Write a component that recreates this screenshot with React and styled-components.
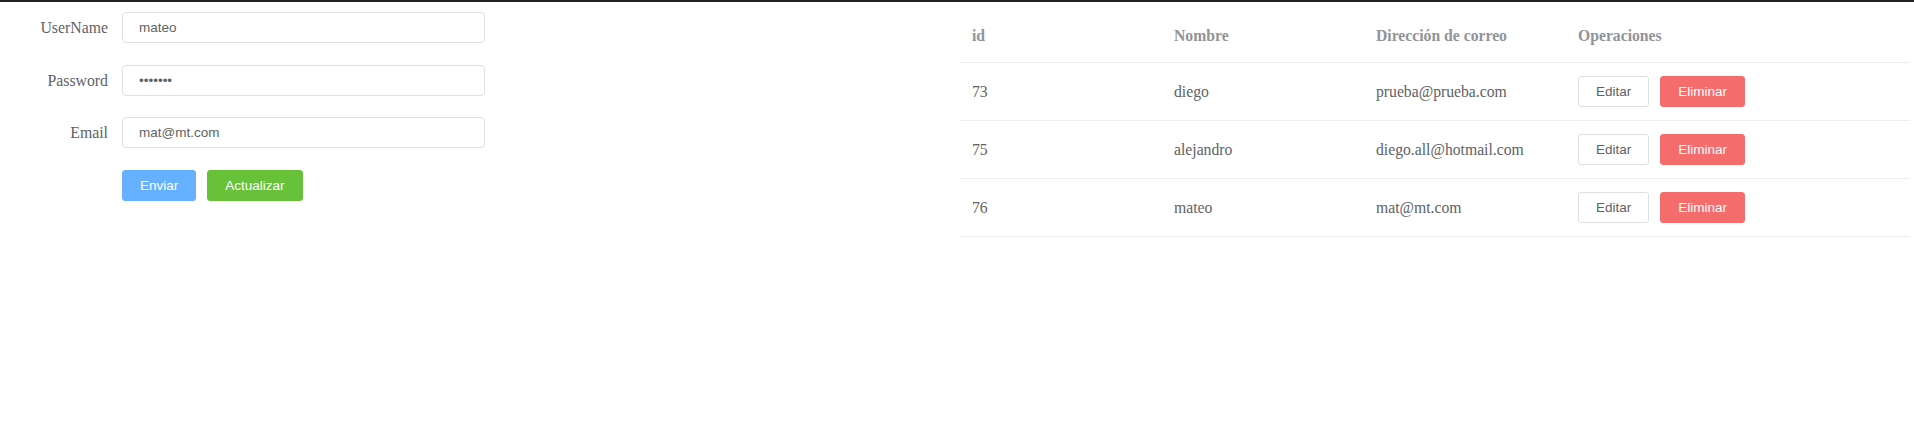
import React from "react";
import styled, { createGlobalStyle } from "styled-components";

const GlobalStyle = createGlobalStyle`
  html, body { margin: 0; padding: 0; background: #ffffff; }
  body { font-family: "Liberation Serif", "Times New Roman", serif; font-size: 16px; color: #606266; }
  * { box-sizing: border-box; }
`;

const TopBar = styled.div`
  height: 2px;
  background: #232323;
`;

const Layout = styled.div`
  display: grid;
  grid-template-columns: 960px 1fr;
`;

const FormPanel = styled.form`
  display: flex;
  flex-direction: column;
  gap: 21.7px;
  padding-top: 10px;
  width: 485px;
`;

const FormRow = styled.div`
  display: grid;
  grid-template-columns: 108px 363px;
  column-gap: 14px;
  align-items: center;
`;

const Label = styled.label`
  text-align: right;
  font-family: "Liberation Serif", "Times New Roman", serif;
  font-size: 15.8px;
  color: #606266;
  line-height: 31px;
`;

const Input = styled.input`
  height: 31px;
  width: 100%;
  border: 1px solid #dcdfe6;
  border-radius: 4px;
  padding: 0 16px;
  font-family: "Liberation Sans", Arial, sans-serif;
  font-size: 13.5px;
  color: #606266;
  background: #fff;
  outline: none;
`;

const ButtonGroup = styled.div`
  display: flex;
  gap: 11px;
`;

const variants = {
  primary: { bg: "#66b1ff", border: "#66b1ff", color: "#ffffff" },
  success: { bg: "#67c23a", border: "#67c23a", color: "#ffffff" },
  danger: { bg: "#f56c6c", border: "#f56c6c", color: "#ffffff" },
  plain: { bg: "#ffffff", border: "#dcdfe6", color: "#606266" },
};

const Button = styled.button`
  height: 31px;
  padding: 0 17px;
  border-radius: 3px;
  border: 1px solid ${(p) => variants[p.$variant].border};
  background: ${(p) => variants[p.$variant].bg};
  color: ${(p) => variants[p.$variant].color};
  font-family: "Liberation Sans", Arial, sans-serif;
  font-size: 13.5px;
  line-height: 1;
  cursor: pointer;
`;

const TablePanel = styled.div`
  padding-top: 8px;
  padding-right: 4px;
`;

const Table = styled.table`
  width: 100%;
  border-collapse: collapse;
  table-layout: fixed;
  font-family: "Liberation Serif", "Times New Roman", serif;
  font-size: 15.7px;
`;

const HeadCell = styled.th`
  width: ${(p) => p.$width || "auto"};
  height: 52px;
  padding: 0 0 0 12px;
  text-align: left;
  font-weight: bold;
  color: #909399;
  border-bottom: 1px solid #ebeef5;
`;

const Cell = styled.td`
  height: 58px;
  padding: 1px 0 0 12px;
  color: #606266;
  border-bottom: 1px solid #ebeef5;
`;

const Actions = styled.div`
  display: flex;
  gap: 11px;
`;

const rows = [
  { id: 73, name: "diego", email: "prueba@prueba.com" },
  { id: 75, name: "alejandro", email: "diego.all@hotmail.com" },
  { id: 76, name: "mateo", email: "mat@mt.com" },
];

export default function App() {
  return (
    <>
      <GlobalStyle />
      <TopBar />
      <Layout>
        <FormPanel onSubmit={(e) => e.preventDefault()}>
          <FormRow>
            <Label>UserName</Label>
            <Input type="text" defaultValue="mateo" />
          </FormRow>
          <FormRow>
            <Label>Password</Label>
            <Input type="password" defaultValue="1234567" />
          </FormRow>
          <FormRow>
            <Label>Email</Label>
            <Input type="text" defaultValue="mat@mt.com" />
          </FormRow>
          <FormRow>
            <span />
            <ButtonGroup>
              <Button type="button" $variant="primary">Enviar</Button>
              <Button type="button" $variant="success">Actualizar</Button>
            </ButtonGroup>
          </FormRow>
        </FormPanel>
        <TablePanel>
          <Table>
            <thead>
              <tr>
                <HeadCell $width="202px">id</HeadCell>
                <HeadCell $width="202px">Nombre</HeadCell>
                <HeadCell $width="202px">Dirección de correo</HeadCell>
                <HeadCell>Operaciones</HeadCell>
              </tr>
            </thead>
            <tbody>
              {rows.map((r) => (
                <tr key={r.id}>
                  <Cell>{r.id}</Cell>
                  <Cell>{r.name}</Cell>
                  <Cell>{r.email}</Cell>
                  <Cell>
                    <Actions>
                      <Button type="button" $variant="plain">Editar</Button>
                      <Button type="button" $variant="danger">Eliminar</Button>
                    </Actions>
                  </Cell>
                </tr>
              ))}
            </tbody>
          </Table>
        </TablePanel>
      </Layout>
    </>
  );
}
